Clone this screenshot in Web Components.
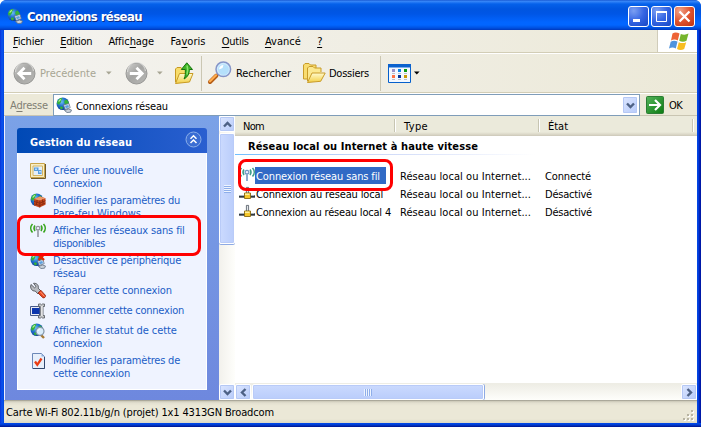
<!DOCTYPE html>
<html lang="fr">
<head>
<meta charset="utf-8">
<title>Connexions réseau</title>
<style>
html,body{margin:0;padding:0;overflow:hidden;background:#fff}
body{width:701px;height:427px;font:11px/14px "DejaVu Sans Condensed","DejaVu Sans",sans-serif;font-stretch:condensed;color:#000;cursor:default}
</style>
</head>
<body>
<net-window></net-window>
<script>
const define = (name, html, init) => customElements.define(name, class extends HTMLElement {
  constructor() {
    super();
    const t = document.createElement('template');
    t.innerHTML = '<style>*{box-sizing:border-box}:host{box-sizing:border-box}</style>' + html;
    this.attachShadow({ mode: 'open' }).appendChild(t.content.cloneNode(true));
  }
  connectedCallback() { if (init) init.call(this, this.shadowRoot); }
});

const globe = `
<defs><radialGradient id="g" cx=".4" cy=".35" r=".7"><stop offset="0" stop-color="#6fc0f5"/><stop offset=".45" stop-color="#2374d0"/><stop offset="1" stop-color="#0a3690"/></radialGradient></defs>
<circle cx="6.8" cy="6.8" r="6.3" fill="url(#g)"/>
<path d="M1.500 4C3 1.500 4.500 1 6 1L6.300 2.500 5 3.500 5.300 5 4 6 3.500 7.500 2 7.500.9 6zM8.500 3.500l2-1 2 2.300.5 2-2.300 1.500L9.200 7l-1-1zM3.800 10l2-.8 1.200 1.500-1 1.700-1.600-.6z" fill="#35b23a"/>
<path d="M2 4.500C3 2.800 4.200 2 5.500 1.700L4.700 3.200 3.800 4.500z" fill="#b0ee94"/>`;
const cable = `<path d="M7.500 8l5.500-1.500 1.200 4.200-5 1.800z" fill="#dce8f5" stroke="#65758c" stroke-width=".8"/><path d="M9 8.800l3.300-.9.700 2.300-3.300 1z" fill="#5ba0df"/><path d="M8.500 13.500l4-1.500 3 1-1 2.200-3.500.3z" fill="#cbd2da" stroke="#617083" stroke-width=".8"/>`;
const waves = (c, m) => `<path d="M2.500 1C.2 3.500.2 7 2.500 9.500M13.500 1c2.300 2.500 2.300 6 0 8.500" fill="none" stroke="${c}" stroke-width="1.600"/><path d="M5 2.500c-1.300 1.700-1.300 3.900 0 5.600M11 2.500c1.300 1.700 1.300 3.900 0 5.600" fill="none" stroke="${c}" stroke-width="1.400"/><circle cx="8" cy="5.300" r="1.900" fill="#eef" stroke="${m}" stroke-width="1.200"/><path d="M8 6.500V14" stroke="${m}" stroke-width="2"/><path d="M8 7v7" stroke="#dde" stroke-width=".6"/>`;
const folder = `<linearGradient id="f" x2="0" y2="1"><stop stop-color="#fffbd0"/><stop offset="1" stop-color="#f3cf45"/></linearGradient>`;
const disc = `<defs><linearGradient id="d" x2="1" y2="1"><stop stop-color="#d2d2d0"/><stop offset=".45" stop-color="#a5a5a3"/><stop offset="1" stop-color="#b9b9b6"/></linearGradient></defs><circle cx="11.500" cy="11.500" r="10.500" fill="url(#d)" stroke="#979795"/><path d="M2.500 10A9 9 0 0 1 20.500 9" fill="none" stroke="#dededc" stroke-width="1.200" opacity=".8"/>`;
const icons = {
  net: [16,16, globe + cable],
  status: [16,16, globe + `<path d="M9 10l5 5" stroke="#a77a36" stroke-width="2.400"/><circle cx="10" cy="8.300" r="4" fill="#d9ecfa" stroke="#8295a9" stroke-width="1.200"/><path d="M8 8a2.300 2.300 0 0 1 2-2" stroke="#fff" fill="none"/>`],
  off: [16,16, globe + cable + `<path d="M8.500 1.500l5.500 5.500M14 1.500l-5.500 5.500" stroke="#e32600" stroke-width="2.400"/>`],
  create: [16,16, `<path d="M.5.5h14v14H.5z" fill="#f7edc4" stroke="#c9a44a"/><path d="M15.500 1v14.500H1" fill="none" stroke="#6e5a2c"/><path d="M3 3h9.500v9.500H3z" fill="#e4effb" stroke="#d4b565"/><path d="M4 4.500h4.500v3.500H4zM8 7h3.500v4H8z" fill="#5a9fe0"/><path d="M5 5.500h2v1.500H5zM9 8h2v1.500H9z" fill="#b8dcfa"/>`],
  fire: [16,16, globe + `<path d="M4 6l6-2.500 5.500 1.800v6.500L9.500 14.500 4 12.500z" fill="#c4461c"/><path d="M4 6l6-2.500 5.500 1.800L9.800 7.500z" fill="#ee9a6b"/><path d="M4 8.500l5.800 1.700 5.700-2.500M4 10.800l5.800 1.700 5.700-2.500M9.800 7.500v7M7 7v2.300M6.500 9.500v2M12.500 6.500V9M13 9v2.300" stroke="#82270d" stroke-width=".8" fill="none"/>`],
  wifi: [16,16, waves('#36a51c', '#8f9299')],
  wifi2: [16,16, waves('#3c9d8a', '#6d95c0')],
  repair: [16,16, `<path d="M1 1.500L4.500 4.800 6 3.500 3.500.3C7 0 9 2.500 8.200 5.200L11 8 8 11 5.200 8C2 8.500-.3 5 1 1.500z" fill="#b9bbc0" stroke="#505359" stroke-width=".9"/><path d="M8 10l2.800-2.800 4.500 5c.8 1.500-1 3.400-2.500 2.500z" fill="#e94721" stroke="#8d210b" stroke-width=".8"/><path d="M10.500 9l4 4.500" stroke="#ff9c78"/>`],
  rename: [16,16, `<path d="M.5 3.500h9v9h-9z" fill="#e8e9f4" stroke="#45598b"/><path d="M2 5h7.500v6H2z" fill="#0b35ae"/><path d="M8.500 1h2l1 .8 1-.8h2v2.500h-1.500v9h1.500V15h-2l-1-.8-1 .8h-2v-2.500h1.800v-9H8.500z" fill="#c5c6c9" stroke="#5f6269" stroke-width=".9"/><path d="M12 3v10" stroke="#fff"/>`],
  props: [16,16, `<path d="M2.500.5h9l3 3v12h-12z" fill="#e7effb" stroke="#6c88b8"/><path d="M14.500 4v11.500H3" stroke="#32486f" fill="none"/><path d="M11.500.5v3h3z" fill="#91aedb"/><path d="M5 8.500l2.300 3.300L11.500 5.500" stroke="#ea3b13" stroke-width="2.300" fill="none"/>`],
  lan: [16,16, `<path d="M7.400 2.400h2.200v6H7.400z" fill="#e4e7ea" stroke="#4b545e" stroke-width=".8"/><path d="M0 11.500h16" stroke="#30383f" stroke-width="2.400"/><path d="M0 10.500h15" stroke="#aab4bb"/><path d="M5.500 8h6v5.500h-6z" fill="#f4c72b" stroke="#8a6b10" stroke-width=".9"/><path d="M6 8.500h4.500v1.500H6z" fill="#ffef9c"/>`],
  back: [23,23, disc + `<path d="M18.200 11.500H6.500M11.500 5.800L5.800 11.500l5.700 5.700" fill="none" stroke="#fff" stroke-width="2.800"/>`],
  fwd: [23,23, disc + `<path d="M4.800 11.500h11.700M11.500 5.800l5.700 5.700-5.700 5.700" fill="none" stroke="#fff" stroke-width="2.800"/>`],
  up: [19,23, folder + `<path d="M.5 20V7L2 5.500h4L7.500 7H13v4" fill="#f8dd6b" stroke="#c79a24"/><path d="M.5 21.500l4-10h13.500l-3.500 8.500z" fill="url(#f)" stroke="#c99b23"/><path d="M6.300 7.500L11.800.8 17.500 7.500h-3.200c.2 4-1.500 7.500-5.200 9.500 1.400-3 1.300-5.700 1.200-9.500z" fill="#3fb527" stroke="#16760d"/><path d="M12 3.500c1 3 1 6 0 9" stroke="#8be36b" fill="none" stroke-width="1.500"/>`],
  search: [24,24, `<path d="M2 21l6.500-6.500" stroke="#b35a12" stroke-width="4" stroke-linecap="round"/><path d="M2 20.300l6-6" stroke="#ffad4f" stroke-width="2.300" stroke-linecap="round"/><circle cx="15.300" cy="8.300" r="7.300" fill="#cdeafd" stroke="#8695c8" stroke-width="1.500"/><circle cx="15.500" cy="8.500" r="5.300" fill="#b5e0fb"/><path d="M11 8.500c.2-3 2-4.300 4.500-4.500l-1 3z" fill="#fff"/>`],
  folders: [23,21, folder + `<path d="M.5 16V2L2 .5h4L7.500 2H13v4l-9 10z" fill="#f8dc70" stroke="#c99c29"/><path d="M4.500 18V5L6 3.500h4L11.500 5H18v4" fill="#fbe890" stroke="#c99c29"/><path d="M4.500 19.500l4.500-9.500h13.200l-4.500 8.300z" fill="url(#f)" stroke="#c99c29"/>`],
  views: [23,19, `<path d="M.5.5h22v18H.5z" fill="#f3f8ff" stroke="#0560cc"/><path d="M0 0h23v3.500H0z" fill="#0b62ce"/><path d="M4 5h3v3H4z" fill="#9a92c7"/><path d="M10 5h3v3h-3z" fill="#0b84e4"/><path d="M16 5h3v3h-3z" fill="#0d9b14"/><path d="M4 11h3v3H4z" fill="#ff7344"/><path d="M10 11h3v3h-3z" fill="#073796"/><path d="M16 11h3v3h-3z" fill="#c99a07"/><path d="M4 9.500h3m3 0h3m3 0h3M4 15.500h3m3 0h3m3 0h3" stroke="#b9c0cb"/>`],
  go: [18,18, `<defs><linearGradient id="o" x2="1" y2="1"><stop stop-color="#55b45b"/><stop offset="1" stop-color="#0b7b11"/></linearGradient></defs><rect x=".5" y=".5" width="17" height="17" rx="1" fill="url(#o)" stroke="#2c7d35"/><path d="M3 9h10.500M9 4l5 5-5 5" fill="none" stroke="#fff" stroke-width="2.200"/>`],
  flag: [20,19, `<path d="M3.500 1.500C6-.2 8 .4 10.500 1.500L8.800 8.500C6.500 7.200 4.300 7.200 2 8.500z" fill="#ee6336"/><path d="M11.800 2c2.500 1 5 1 7.700-.4l-2 7.200c-2.300 1.200-4.800 1.200-7.300 0z" fill="#76b52c"/><path d="M1.700 9.700C4 8.400 6.200 8.500 8.500 9.600L6.800 16.500C4.500 15.200 2.300 15.300 0 16.500z" fill="#4e93dd"/><path d="M9.800 10.200c2.500 1.200 4.900 1.200 7.400 0l-2 6.800c-2.300 1.300-4.700 1.300-7.200.1z" fill="#f8bd21"/>`],
  tri: [6,4, `<path d="M0 .5h5.600L2.800 3.500z" fill="currentColor"/>`],
};

define('xp-icon', ``, function (r) {
  const [w, h, body] = icons[this.getAttribute('name')];
  r.innerHTML = `<style>:host{display:block;flex:none;width:${w}px;height:${h}px}svg{display:block;overflow:visible}</style><svg width="${w}" height="${h}" viewBox="0 0 ${w} ${h}">${body}</svg>`;
});

/* One line of text spread evenly over a given width. */
define('fit-text', `<style>:host{display:block;white-space:nowrap;flex:none}span{display:inline-block;vertical-align:top;padding-top:1px;margin-bottom:-1px}</style><span><slot></slot></span>`, function (r) {
  const w = +this.getAttribute('w'), s = r.querySelector('span');
  this.style.width = w + 'px';
  s.style.letterSpacing = (w - s.getBoundingClientRect().width) / this.textContent.length + 'px';
});

define('xp-caption-button', `<style>
:host{display:block;width:21px;height:21px;border:1px solid #fff;border-radius:3px;background:radial-gradient(circle at 25% 20%,#7b9ff2,#3565e3 50%,#1747c4)}
:host([kind=close]){background:radial-gradient(circle at 25% 20%,#f0a389,#e1542f 50%,#bd3110)}svg{display:block}</style><svg width="19" height="19" fill="none" stroke="#fff"></svg>`, function (r) {
  r.querySelector('svg').innerHTML = { min:'<path d="M4 13.500h7" stroke-width="3"/>', max:'<path d="M4.500 5.500h10v9h-10z"/><path d="M4 5h11" stroke-width="2"/>', close:'<path d="M4.500 4.500l10 10M14.500 4.500l-10 10" stroke-width="2.300"/>' }[this.getAttribute('kind')];
});

define('title-bar', `<style>
:host{display:flex;align-items:flex-start;height:30px;padding:6px 6px 0 5px;background:linear-gradient(#0a48c8 0,#3d8bf8 1px,#2a7cf5 2px,#0561ea 4px,#0055e0 9px,#0056e6 14px,#0265ff 22px,#0266ff 25px,#0050e0 28px,#0038bc 30px);border-radius:6px 6px 0 0;color:#fff}
xp-icon{margin:2px 4px 0 2px}fit-text{font:bold 13px/18px "DejaVu Sans Condensed","DejaVu Sans",sans-serif;font-stretch:condensed;text-shadow:1px 1px #0a2d8a;margin-top:1px}.b{margin-left:auto;display:flex;gap:2px}</style>
<xp-icon name="net"></xp-icon><fit-text w="115">Connexions réseau</fit-text><div class="b"><xp-caption-button kind="min"></xp-caption-button><xp-caption-button kind="max"></xp-caption-button><xp-caption-button kind="close"></xp-caption-button></div>`);

define('menu-bar', `<style>
:host{display:flex;height:24px;background:linear-gradient(90deg,#f4f3f0,#ece9d8);border-bottom:1px solid #fff;box-shadow:inset 0 -1px #d2cdb6}
nav{display:flex;padding:4px 0 0 9px}fit-text{margin-right:16.200px}.f{margin-left:auto;width:40px;height:22px;border-left:1px solid #d0ccba;background:#fff;padding:2px 0 0 11px}u{text-underline-offset:2px;text-decoration-thickness:1px}</style>
<nav><fit-text w="31"><u>F</u>ichier</fit-text><fit-text w="32"><u>E</u>dition</fit-text><fit-text w="46">Affic<u>h</u>age</fit-text><fit-text w="35">Fa<u>v</u>oris</fit-text><fit-text w="27"><u>O</u>utils</fit-text><fit-text w="36"><u>A</u>vancé</fit-text><fit-text w="5"><u>?</u></fit-text></nav><div class="f"><xp-icon name="flag"></xp-icon></div>`);

define('tool-bar', `<style>
:host{display:flex;align-items:center;height:39px;padding-left:9px;background:linear-gradient(90deg,#f4f3f0,#ece9d8);border-bottom:1px solid #d2cdb6}
.g{color:#a7a593}.s{width:1px;height:35px;background:#cbc7b3}fit-text{margin-top:-1px}</style>
<xp-icon name="back"></xp-icon><fit-text class="g" w="56" style="margin-left:4px">Précédente</fit-text><xp-icon class="g" name="tri" style="margin-left:10px"></xp-icon>
<xp-icon name="fwd" style="margin-left:13px"></xp-icon><xp-icon class="g" name="tri" style="margin-left:9px"></xp-icon><xp-icon name="up" style="margin-left:12px"></xp-icon>
<div class="s" style="margin-left:7px"></div><xp-icon name="search" style="margin-left:6px"></xp-icon><fit-text w="55" style="margin-left:4px">Rechercher</fit-text>
<xp-icon name="folders" style="margin-left:12px"></xp-icon><fit-text w="40" style="margin-left:3px">Dossiers</fit-text><div class="s" style="margin-left:11px"></div>
<xp-icon name="views" style="margin-left:7px"></xp-icon><xp-icon name="tri" style="margin-left:3px"></xp-icon>`);

define('address-bar', `<style>
:host{display:flex;height:23px;background:#ece9d8;border-top:1px solid #fff;border-bottom:1px solid #c9c5b2}
.l{color:#807e73;margin:4px 5px 0 6px}.box{display:flex;align-items:center;height:22px;width:587px;background:#fff;border:1px solid #7f9db9;padding:0 1px 0 2px;gap:4px}
.box xp-scroll-button{margin-left:auto;height:18px}.go{margin:2px 5px 0 6px}.ok{margin-top:4px}u{text-underline-offset:2px}</style>
<fit-text class="l" w="38">A<u>d</u>resse</fit-text><div class="box"><xp-icon name="net"></xp-icon><fit-text w="92" style="margin-top:1px">Connexions réseau</fit-text><xp-scroll-button dir="down"></xp-scroll-button></div><xp-icon class="go" name="go"></xp-icon><fit-text class="ok" w="13">OK</fit-text>`);

define('xp-scroll-button', `<style>:host{display:flex;align-items:center;justify-content:center;flex:none;width:16px;height:16px;border:1px solid #fff;outline:1px solid #b5c8f5;outline-offset:-2px;border-radius:2px;background:linear-gradient(135deg,#dce6ff,#b7cbfa)}svg{display:block}</style><svg width="9" height="9" fill="none" stroke="#4d6185" stroke-width="2.400"><path d="M1 2.500L4.500 6 8 2.500"/></svg>`, function (r) {
  r.querySelector('svg').style.transform = `rotate(${{ down: 0, up: 180, left: 90, right: -90 }[this.getAttribute('dir')]}deg)`;
});

define('xp-scrollbar', `<style>
:host{display:flex;background:linear-gradient(90deg,#f2f1ec,#fefefb)}:host([vertical]){flex-direction:column;width:16px}
:host(:not([vertical])){height:17px;background:linear-gradient(#eeede5,#fefefb);border-top:1px solid #eeede5}
.t{display:flex;flex:none;align-items:center;justify-content:center;border:1px solid #fff;border-radius:2px;background:linear-gradient(#cbdafe,#bacdfb);box-shadow:inset 0 0 0 1px #b9cbf8,1px 0 #8eaae4}
:host([vertical]) .t{background:linear-gradient(90deg,#cbdafe,#bacdfb);box-shadow:inset 0 0 0 1px #b9cbf8,0 1px #8eaae4}
i{width:8px;height:7px;background:repeating-linear-gradient(90deg,#eef4fe 0 1px,#8eaeea 1px 2px)}:host([vertical]) i{width:7px;height:8px;background:repeating-linear-gradient(#eef4fe 0 1px,#8eaeea 1px 2px)}
.e{margin-left:auto}:host([vertical]) .e{margin:auto 0 0}</style><div class="a"></div><div class="t"><i></i></div><div class="e"></div>`, function (r) {
  const v = this.hasAttribute('vertical'), t = r.querySelector('.t');
  r.querySelector('.a').innerHTML = `<xp-scroll-button dir="${v ? 'up' : 'left'}"></xp-scroll-button>`;
  r.querySelector('.e').innerHTML = `<xp-scroll-button dir="${v ? 'down' : 'right'}"></xp-scroll-button>`;
  t.style[v ? 'height' : 'width'] = this.getAttribute('thumb') + 'px'; t.style[v ? 'marginTop' : 'marginLeft'] = '1px';
});

define('task-link', `<style>:host{display:flex;gap:7px;min-height:16px;color:#215dc6;line-height:13px}</style><div class="i"></div><div><slot></slot></div>`, function (r) {
  r.querySelector('.i').innerHTML = `<xp-icon name="${this.getAttribute('icon')}"></xp-icon>`;
});

define('task-panel', `<style>
:host{display:block;padding:12px 12px 10px 12px;background:linear-gradient(#7ba2e7,#6e88de);width:214px}
header{display:flex;align-items:center;height:25px;padding:0 5px 0 13px;border-radius:3px 3px 0 0;background:linear-gradient(90deg,#0049b5,#2a5fd0);color:#fff;font-weight:bold}
header svg{margin:-2px 0 0 auto}header fit-text{margin-top:2px}.body{display:flex;flex-direction:column;gap:4px;height:237px;padding:10px 0 0 12px;background:#eff3ff;border:1px solid #fff;border-top:0}</style>
<header><fit-text w="102">Gestion du réseau</fit-text><svg width="17" height="17" fill="none" stroke="#fff"><circle cx="8.500" cy="8.500" r="7.500" fill="#3a6dd3" stroke="#8bafe9"/><path d="M5.500 7.800l3-3 3 3M5.500 12l3-3 3 3" stroke-width="1.500"/></svg></header>
<div class="body">
<task-link icon="create"><fit-text w="90">Créer une nouvelle</fit-text><fit-text w="49">connexion</fit-text></task-link>
<task-link icon="fire"><fit-text w="127">Modifier les paramètres du</fit-text><fit-text w="88">Pare-feu Windows</fit-text></task-link>
<task-link icon="wifi"><fit-text w="132">Afficher les réseaux sans fil</fit-text><fit-text w="52">disponibles</fit-text></task-link>
<task-link icon="off"><fit-text w="128">Désactiver ce périphérique</fit-text><fit-text w="33">réseau</fit-text></task-link>
<task-link icon="repair"><fit-text w="119">Réparer cette connexion</fit-text></task-link>
<task-link icon="rename"><fit-text w="131">Renommer cette connexion</fit-text></task-link>
<task-link icon="status"><fit-text w="124">Afficher le statut de cette</fit-text><fit-text w="49">connexion</fit-text></task-link>
<task-link icon="props"><fit-text w="127">Modifier les paramètres de</fit-text><fit-text w="77">cette connexion</fit-text></task-link>
</div>`);

define('connection-row', `<style>
:host{display:grid;grid-template-columns:16px 142px 148px 1fr;height:18px;align-items:start;padding-left:4px}
.n{justify-self:start;padding:2px 1px 1px;height:17px}:host([selected]) .n{background:#316ac5;color:#fff;padding-right:6px}::slotted([slot=type]),::slotted([slot=state]){margin-top:2px}</style>
<div class="i"></div><div class="n"><slot name="name"></slot></div><slot name="type"></slot><slot name="state"></slot>`, function (r) {
  r.querySelector('.i').innerHTML = `<xp-icon name="${this.getAttribute('icon')}"></xp-icon>`;
});

define('connection-list', `<style>
:host{display:flex;flex-direction:column;flex:1;background:#fff;min-width:0}
.h{display:grid;grid-template-columns:161px 144px 154px 1fr;height:20px;flex:none;background:linear-gradient(#ebeadb 16px,#d6d2c2 19px,#cbc7b8);}
.h div{display:flex;padding:3px 0 0 8px}.h div:not(:last-child)::after{content:"";margin:0 0 4px auto;width:2px;background:linear-gradient(90deg,#c7c5b2 50%,#fff 50%)}
.t{font-weight:bold;padding:3px 0 0 13px;height:18px;margin-bottom:13px}.t::after{content:"";display:block;width:300px;height:1px;margin:1px 0 0 -13px;background:linear-gradient(90deg,#70bfff,#c6d3f7 40%,#fff)}xp-scrollbar{margin-top:auto}
fit-text[slot=type]{margin-left:3px}</style>
<div class="h"><div><fit-text w="21">Nom</fit-text></div><div><fit-text w="24">Type</fit-text></div><div><fit-text w="20">État</fit-text></div><div></div></div>
<div class="t"><fit-text w="230">Réseau local ou Internet à haute vitesse</fit-text></div>
<connection-row icon="wifi2" selected><fit-text slot="name" w="124">Connexion réseau sans fil</fit-text><fit-text slot="type" w="131">Réseau local ou Internet...</fit-text><fit-text slot="state" w="46">Connecté</fit-text></connection-row>
<connection-row icon="lan"><fit-text slot="name" w="127">Connexion au réseau local</fit-text><fit-text slot="type" w="131">Réseau local ou Internet...</fit-text><fit-text slot="state" w="47">Désactivé</fit-text></connection-row>
<connection-row icon="lan"><fit-text slot="name" w="135">Connexion au réseau local 4</fit-text><fit-text slot="type" w="131">Réseau local ou Internet...</fit-text><fit-text slot="state" w="47">Désactivé</fit-text></connection-row>
<xp-scrollbar thumb="232"></xp-scrollbar>`);

define('status-bar', `<style>
:host{display:flex;height:23px;padding:5px 2px 1px 2px;justify-content:space-between;background:linear-gradient(#8d8b80 0,#c9c6b5 1px,#e3e0d0 3px,#ebe8d7 6px,#ebe8d7 19px,#dcd8c4)}svg{align-self:flex-end;display:block}</style>
<fit-text w="268">Carte Wi-Fi 802.11b/g/n (projet) 1x1 4313GN Broadcom</fit-text><svg width="12" height="12"><path d="M9 1h2v2H9zM5 5h2v2H5zM9 5h2v2H9zM1 9h2v2H1zM5 9h2v2H5zM9 9h2v2H9z" fill="#fff"/><path d="M8 0h2v2H8zM4 4h2v2H4zM8 4h2v2H8zM0 8h2v2H0zM4 8h2v2H4zM8 8h2v2H8z" fill="#b8b4a2"/></svg>`);

define('callout-ring', `<style>:host{display:block;position:absolute;border:3px solid #f00;border-radius:8px}</style>`);

define('net-window', `<style>
:host{display:flex;flex-direction:column;position:relative;width:701px;height:427px;background:linear-gradient(90deg,#0831d9 0,#0a53ee 2px,#0045df 4px,#0045df 697px,#0345e8 698px,#0019a8 700px);border-radius:7px 7px 0 0}
.in{display:flex;flex-direction:column;width:693px;height:393px;margin-left:4px}.m{display:flex;height:284px;border-left:1px solid #eef}.foot{height:4px;background:linear-gradient(#0046e5 25%,#0131bd 60%,#00138c)}</style>
<title-bar></title-bar><div class="in"><menu-bar></menu-bar><tool-bar></tool-bar><address-bar></address-bar><div class="m"><task-panel></task-panel><xp-scrollbar vertical thumb="111"></xp-scrollbar><connection-list></connection-list></div><status-bar></status-bar></div><div class="foot"></div>
<callout-ring style="left:17px;top:215px;width:184px;height:41px"></callout-ring><callout-ring style="left:238px;top:159px;width:155px;height:32px"></callout-ring>`);
</script>
</body>
</html>
